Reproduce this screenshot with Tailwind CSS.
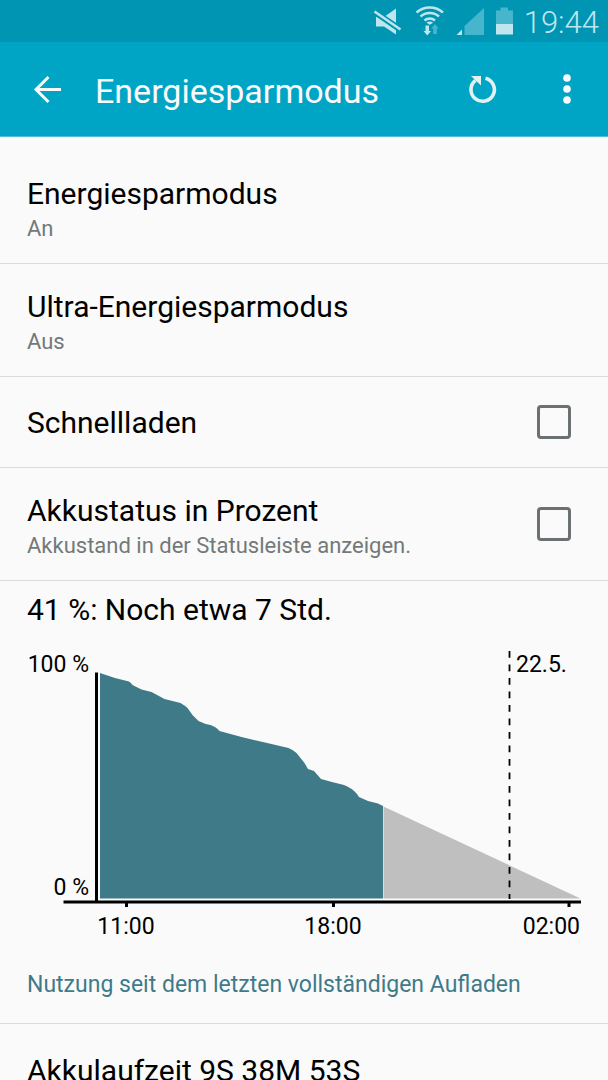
<!DOCTYPE html>
<html lang="de">
<head>
<meta charset="utf-8">
<meta name="viewport" content="width=device-width, initial-scale=1">
<title>Energiesparmodus</title>
<script src="https://cdn.jsdelivr.net/npm/@tailwindcss/browser@4"></script>
</head>
<body class="flex h-screen flex-col bg-[#fafafa] font-[Roboto,sans-serif] text-black">

<div class="flex h-[42px] shrink-0 items-center justify-end bg-[#0095b3] pr-[9px] text-[#bfe5ed]">
  <svg class="h-[42px] w-[152px]" viewBox="364 0 152 42" fill="currentColor" aria-hidden="true">
    <!-- muted speaker -->
    <path d="M376 17h8l12-8.500v26l-12-8h-8z"/>
    <path d="M374 11.500L401 30" stroke="#0095b3" stroke-width="6"/>
    <path d="M374.500 11.500l26 18" stroke="currentColor" stroke-width="2.600"/>
    <!-- wifi with data arrows -->
    <g fill="none" stroke="currentColor" stroke-width="2.400">
      <path d="M416.500 12.500a20 20 0 0 1 26.500 0"/>
      <path d="M420.500 16.500a14 14 0 0 1 18.500 0"/>
      <path d="M424.500 20.500a8 8 0 0 1 10.500 0"/>
    </g>
    <path d="M426.500 22.800q3.300-2.600 6.600 0l-3.300 2z"/>
    <path d="M425.500 25.500h3.500v5.500h2l-3.700 4.500-3.800-4.500h2z"/>
    <path d="M433.200 34v-5.500h-2l3.800-4.500 3.800 4.500h-2v5.500z" fill="#47b5cb"/>
    <!-- signal -->
    <path d="M464.500 35V26L484 8v27z" fill="#47b5cb"/>
    <path d="M456.500 35h5.500v-5.500z"/>
    <!-- battery -->
    <path d="M496 24V10.500h4.500V7.500h7.500v3h5V24z" fill="#47b5cb"/>
    <path d="M496 24h17v10.500h-17z"/>
  </svg>
  <time class="pt-1 pl-2 text-[31px] leading-[42px] font-light">19:44</time>
</div>

<header class="flex h-[95px] shrink-0 items-center border-b border-[#4dbfd6] bg-[#00a5c6] pr-5 pl-7 text-[#fafafa]">
  <button type="button" aria-label="Zurück" class="flex size-10 items-center justify-center">
    <svg class="size-10" viewBox="0 0 40 40" fill="none" stroke="currentColor" stroke-width="3" aria-hidden="true">
      <path d="M33 20.500H8M20.500 8L8 20.500 20.500 33"/>
    </svg>
  </button>
  <h1 class="min-w-0 flex-1 truncate pt-1 pl-[27px] text-[34px] leading-[48px]">Energiesparmodus</h1>
  <button type="button" aria-label="Zurücksetzen" class="flex size-10 items-center justify-center text-[#e3f1f3]">
    <svg class="size-10" viewBox="464 69 40 40" fill="none" aria-hidden="true">
      <path d="M485.500 78.200A11.700 11.700 0 1 1 475.500 80.300" stroke="currentColor" stroke-width="3.600"/>
      <path d="M471 76h10v9.500z" fill="currentColor"/>
    </svg>
  </button>
  <button type="button" aria-label="Weitere Optionen" class="ml-11 flex size-10 items-center justify-center">
    <svg class="size-10" viewBox="0 0 40 40" fill="currentColor" aria-hidden="true">
      <circle cx="19" cy="9" r="3.800"/><circle cx="19" cy="20" r="3.800"/><circle cx="19" cy="31" r="3.800"/>
    </svg>
  </button>
</header>

<main class="min-h-0 flex-1 overflow-y-auto pt-[14px] [scrollbar-width:none]">
  <button type="button" class="block w-full border-b border-[#dcdcdc] px-[27px] pt-[23px] pb-[19px] text-left">
    <span class="block text-[30px] leading-10">Energiesparmodus</span>
    <span class="block text-[22px] leading-[30px] text-[#737979]">An</span>
  </button>
  <button type="button" class="block w-full border-b border-[#dcdcdc] px-[27px] pt-[23px] pb-[19px] text-left">
    <span class="block text-[30px] leading-10">Ultra-Energiesparmodus</span>
    <span class="block text-[22px] leading-[30px] text-[#737979]">Aus</span>
  </button>
  <label class="flex items-center justify-between border-b border-[#dcdcdc] py-6 pr-[37px] pl-[27px]">
    <span class="pt-0.5 text-[30px] leading-10">Schnellladen</span>
    <input type="checkbox" class="size-[34px] shrink-0 appearance-none rounded-[4px] border-3 border-[#6b7172]">
  </label>
  <label class="flex items-center justify-between border-b border-[#dcdcdc] py-[19px] pr-[37px] pl-[27px]">
    <span class="pt-1">
      <span class="block text-[30px] leading-10">Akkustatus in Prozent</span>
      <span class="block text-[22px] leading-[30px] text-[#737979]">Akkustand in der Statusleiste anzeigen.</span>
    </span>
    <input type="checkbox" class="size-[34px] shrink-0 appearance-none rounded-[4px] border-3 border-[#6b7172]">
  </label>

  <section>
    <h2 class="px-[27px] pt-[9px] text-[30px] leading-10">41 %: Noch etwa 7 Std.</h2>
    <svg class="mt-2.5 block w-full" viewBox="0 640 608 310" role="img" aria-label="Verlauf des Akkustands">
      <path fill="#3f7a89" d="M100 673l6 2 9 3 14 3.500q2 1 3.500 3.500l9 4.500 10 2.500 13 7 16 4q5 3 7 5l5 7 6 6q6 3 12 4 6 2 9 6l22 6 30 7 17 4q5 2 8 5l8 10 3.500 6 6 2 7 8 11 3 12 3q8 3 13 9l2 3 9 4 10 2.500 5 2.500V898.500H100z"/>
      <path fill="#bfbfbf" d="M383.500 806.500L580.500 898.500H383.500z"/>
      <path stroke="#000" stroke-width="3" d="M96.500 672.500V902"/>
      <path stroke="#000" stroke-width="3" d="M63.500 902H581"/>
      <path stroke="#000" stroke-width="3" d="M126.500 902v5M333.500 902v5M569 902v5"/>
      <path stroke="#000" stroke-width="1.800" stroke-dasharray="6.800 6.700" d="M509.500 651V899"/>
      <g class="text-[23px]" fill="#000">
        <text x="89" y="672" text-anchor="end">100 %</text>
        <text x="89" y="895" text-anchor="end">0 %</text>
        <text x="516" y="672">22.5.</text>
        <text x="126" y="934" text-anchor="middle">11:00</text>
        <text x="333" y="934" text-anchor="middle">18:00</text>
        <text x="580" y="934" text-anchor="end">02:00</text>
      </g>
    </svg>
    <p class="border-b border-[#dcdcdc] px-[27px] pt-5 pb-[23px] text-[23px] leading-[30px] text-[#3f7a89]">Nutzung seit dem letzten vollständigen Aufladen</p>
  </section>
  <button type="button" class="block w-full border-b border-[#dcdcdc] px-[27px] py-[27px] text-left text-[30px] leading-10">Akkulaufzeit 9S 38M 53S</button>
</main>
</body>
</html>
